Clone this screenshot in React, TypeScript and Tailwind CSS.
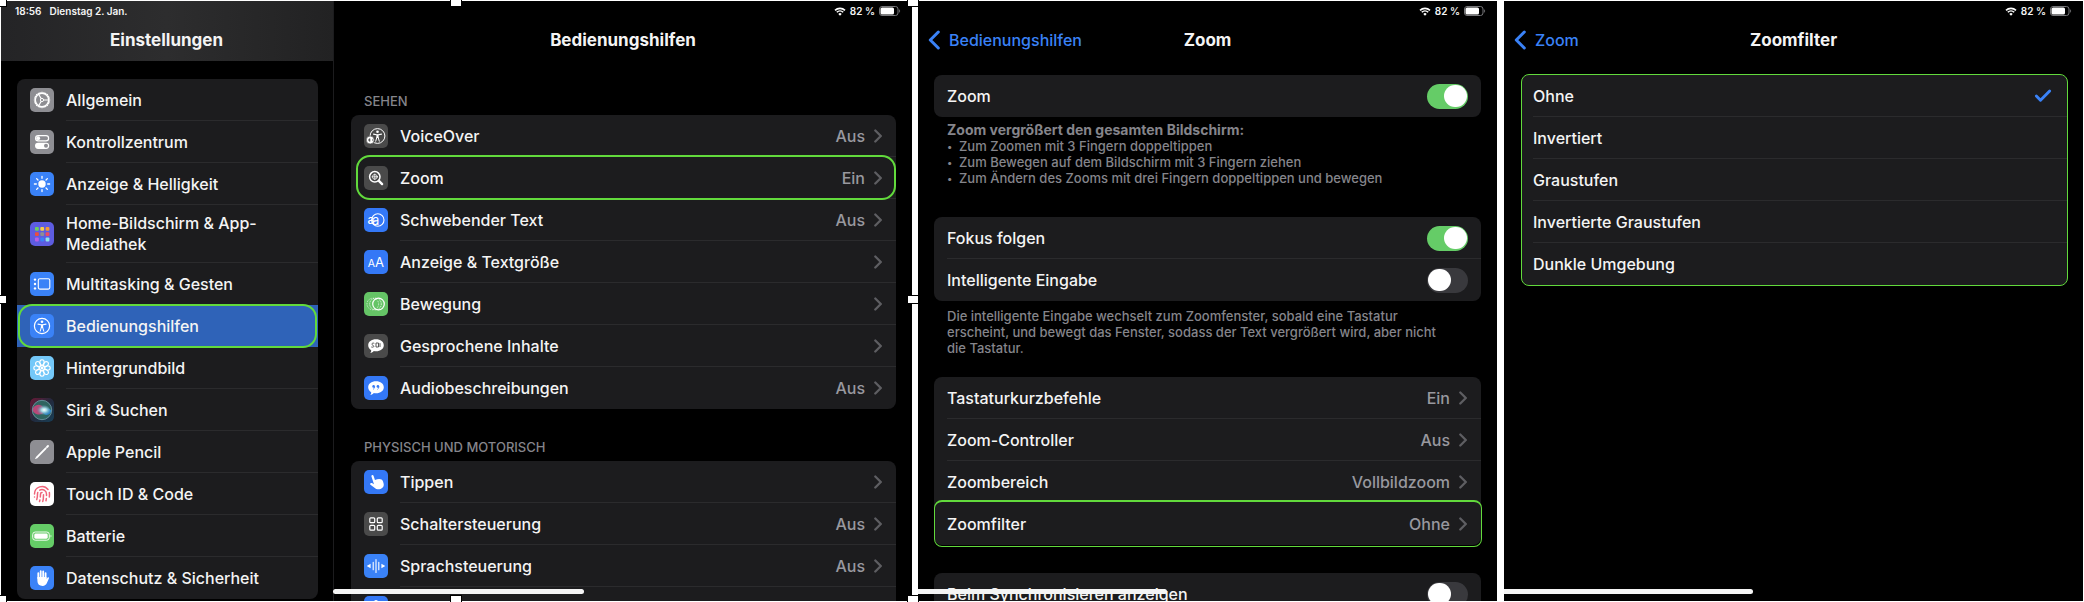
import React from 'react';
import { Check, Fingerprint } from 'lucide-react';

interface RowData {
  label: string;
  icon?: string;
  value?: string;
}

const sidebarRows: RowData[] = [
  { label: 'Allgemein', icon: 'gear' },
  { label: 'Kontrollzentrum', icon: 'toggles' },
  { label: 'Anzeige & Helligkeit', icon: 'sun' },
  { label: 'Home-Bildschirm & App-Mediathek', icon: 'grid' },
  { label: 'Multitasking & Gesten', icon: 'multitask' },
  { label: 'Bedienungshilfen', icon: 'access' },
  { label: 'Hintergrundbild', icon: 'flower' },
  { label: 'Siri & Suchen', icon: 'siri' },
  { label: 'Apple Pencil', icon: 'pencil' },
  { label: 'Touch ID & Code', icon: 'touch' },
  { label: 'Batterie', icon: 'battery' },
  { label: 'Datenschutz & Sicherheit', icon: 'privacy' },
];

const visionRows: RowData[] = [
  { label: 'VoiceOver', icon: 'voiceover', value: 'Aus' },
  { label: 'Zoom', icon: 'zoom', value: 'Ein' },
  { label: 'Schwebender Text', icon: 'hover', value: 'Aus' },
  { label: 'Anzeige & Textgröße', icon: 'textsize' },
  { label: 'Bewegung', icon: 'motion' },
  { label: 'Gesprochene Inhalte', icon: 'spoken' },
  { label: 'Audiobeschreibungen', icon: 'audio', value: 'Aus' },
];

const motorRows: RowData[] = [
  { label: 'Tippen', icon: 'tap' },
  { label: 'Schaltersteuerung', icon: 'switches', value: 'Aus' },
  { label: 'Sprachsteuerung', icon: 'voice', value: 'Aus' },
  { label: '', icon: 'next' },
];

const zoomRows: RowData[] = [
  { label: 'Tastaturkurzbefehle', value: 'Ein' },
  { label: 'Zoom-Controller', value: 'Aus' },
  { label: 'Zoombereich', value: 'Vollbildzoom' },
  { label: 'Zoomfilter', value: 'Ohne' },
];

const filters = ['Ohne', 'Invertiert', 'Graustufen', 'Invertierte Graustufen', 'Dunkle Umgebung'];

const iconBackground: Record<string, string> = {
  gear: 'bg-[#8e8e93]',
  toggles: 'bg-[#8e8e93]',
  sun: 'bg-[#3a82f7]',
  grid: 'bg-[#5d5ce0]',
  multitask: 'bg-[#3a82f7]',
  access: 'bg-[#3a82f7]',
  flower: 'bg-[#74c8f9]',
  siri: 'bg-[#1d1b2c]',
  pencil: 'bg-[#8e8e93]',
  touch: 'bg-white',
  battery: 'bg-[#65cc67]',
  privacy: 'bg-[#3a82f7]',
  voiceover: 'bg-[#4a4a4a]',
  zoom: 'bg-[#4a4a4a]',
  hover: 'bg-[#3478f6]',
  textsize: 'bg-[#3478f6]',
  motion: 'bg-[#65c466]',
  spoken: 'bg-[#4a4a4a]',
  audio: 'bg-[#3478f6]',
  tap: 'bg-[#3478f6]',
  switches: 'bg-[#4a4a4a]',
  voice: 'bg-[#3a82f7]',
  next: 'bg-[#3478f6]',
};

const appColors = ['#6bd05f', '#f7ce46', '#f19a37', '#eb4e3d', '#8e8e93', '#eb4b63', '#b65fe8', '#3a82f7', '#8fe3e8'];
const eighths = [0, 45, 90, 135, 180, 225, 270, 315];
const teeth = Array.from({ length: 24 }, (_, i) => i * 15);

// Kleine Figur mit ausgestreckten Armen
const Person = () => (
  <g fill="none" stroke="white" strokeLinecap="round" strokeLinejoin="round">
    <circle cx="12" cy="7.7" r="1.3" fill="white" stroke="none" />
    <path d="M8 10.1l2.9.6h2.2l2.9-.6" strokeWidth="1.1" />
    <path d="M12 10.7v3.2" strokeWidth="2.2" strokeLinecap="butt" />
    <path d="M10.2 17.2l1.1-3.6M13.8 17.2l-1.1-3.6" strokeWidth="1" />
  </g>
);

const Glyph = ({ name }: { name: string }) => {
  switch (name) {
    case 'gear':
      return (
        <g fill="none" stroke="white">
          <circle cx="12" cy="12" r="6.7" strokeWidth="1.4" />
          {teeth.map((a) => (
            <path key={a} d="M12 3.8v1.5" strokeWidth="1.1" transform={`rotate(${a} 12 12)`} />
          ))}
          <circle cx="12" cy="12" r="1.6" strokeWidth="1" />
          <path d="M13.6 12h5M11.2 10.6L8.6 6.2M11.2 13.4l-2.6 4.4" strokeWidth="1.1" />
        </g>
      );
    case 'toggles':
      return (
        <g>
          <rect x="5.6" y="5.6" width="13" height="5.2" rx="2.6" fill="none" stroke="white" strokeWidth="1.2" />
          <circle cx="8.2" cy="8.2" r="1.9" fill="white" />
          <rect x="5" y="12.7" width="14.2" height="6.2" rx="3.1" fill="white" />
          <circle cx="16" cy="15.8" r="2" fill="#8e8e93" />
        </g>
      );
    case 'sun':
      return (
        <g>
          <circle cx="12" cy="12" r="3.7" fill="white" />
          {eighths.map((a) => (
            <path key={a} d="M12 4.4v1.9" stroke="white" strokeWidth="1.3" strokeLinecap="round" transform={`rotate(${a} 12 12)`} />
          ))}
        </g>
      );
    case 'grid':
      return (
        <g>
          {appColors.map((c, i) => (
            <rect key={c} x={5 + (i % 3) * 5.3} y={5 + Math.floor(i / 3) * 5.3} width="3.8" height="3.8" rx="1" fill={c} />
          ))}
        </g>
      );
    case 'multitask':
      return (
        <g fill="white">
          <rect x="8.3" y="6.7" width="11.5" height="10.4" rx="1.6" fill="none" stroke="white" strokeWidth="1.1" />
          <circle cx="5" cy="7.6" r="1.2" />
          <circle cx="5" cy="12" r="1.2" />
          <circle cx="5" cy="16.4" r="1.2" />
        </g>
      );
    case 'access':
      return (
        <g>
          <circle cx="12" cy="12" r="7.6" fill="none" stroke="white" strokeWidth="1.2" />
          <Person />
        </g>
      );
    case 'flower':
      return (
        <g fill="none" stroke="white" strokeWidth="1.1">
          <circle cx="12" cy="12" r="2.4" />
          <circle cx="12" cy="12" r="0.7" fill="white" />
          {eighths.map((a) => (
            <ellipse key={a} cx="12" cy="6.5" rx="2.2" ry="2.7" transform={`rotate(${a} 12 12)`} />
          ))}
        </g>
      );
    case 'siri':
      return (
        <g>
          <defs>
            <linearGradient id="siriBack" x1="0" y1="0" x2="1" y2="1">
              <stop offset="0" stopColor="#6b1835" />
              <stop offset="0.5" stopColor="#222a3d" />
              <stop offset="1" stopColor="#173f56" />
            </linearGradient>
            <radialGradient id="siriGlow" cx="0.58" cy="0.5" r="0.55">
              <stop offset="0" stopColor="#ffffff" />
              <stop offset="0.35" stopColor="#a5dbe6" />
              <stop offset="1" stopColor="#4f8fa8" stopOpacity="0" />
            </radialGradient>
          </defs>
          <rect width="24" height="24" rx="5" fill="url(#siriBack)" />
          <circle cx="12" cy="12" r="10" fill="#2f6460" />
          <path d="M2.5 12a6 6 0 0 1 11-2.5l1 4.5a7 7 0 0 1-12-2z" fill="#d0437c" opacity="0.85" />
          <path d="M21.5 12.5c-3-3-7-3-9-.5 0 4 3 6 6 4.6 1.5-.9 2.6-2.2 3-4.1z" fill="#2f8ee0" opacity="0.8" />
          <circle cx="12" cy="12" r="9.7" fill="none" stroke="#7d9fb0" strokeWidth="0.7" />
          <ellipse cx="13" cy="12" rx="7" ry="5" fill="url(#siriGlow)" />
        </g>
      );
    case 'pencil':
      return (
        <g stroke="white" strokeLinecap="round">
          <path d="M6.6 17.6L15.7 8.3" strokeWidth="1.9" />
          <path d="M17 7l1-1" strokeWidth="1.9" />
          <path d="M5.6 18.6l1-1" strokeWidth="1" />
        </g>
      );
    case 'touch':
      return <Fingerprint x={3} y={3} width={18} height={18} color="#f0647a" strokeWidth={2} />;
    case 'battery':
      return (
        <g>
          <rect x="2.7" y="8" width="16.6" height="8.2" rx="2.6" fill="none" stroke="white" strokeWidth="0.9" />
          <rect x="4.3" y="9.5" width="13.4" height="5.2" rx="1.4" fill="white" />
          <path d="M20.6 10.7v2.8a1.6 1.6 0 0 0 0-2.8z" fill="white" />
        </g>
      );
    case 'privacy':
      return (
        <g>
          <path d="M8.3 12.5V7.2M10.7 11V5.2M13.2 11V5.4M15.6 12.5V7.2" stroke="white" strokeWidth="1.8" strokeLinecap="round" />
          <path d="M7.4 11h9.1v2.3l1-1.6c.6-.8 1.7-.2 1.4.7l-2 4.6c-.8 1.8-2.2 2.9-4.3 2.9-3.2 0-5.2-1.7-5.2-4.9z" fill="white" />
        </g>
      );
    case 'voiceover':
      return (
        <g>
          <g transform="translate(1.5 0)">
            <circle cx="12" cy="12" r="7.4" fill="none" stroke="white" strokeWidth="1" />
            <Person />
          </g>
          <circle cx="6.2" cy="16" r="4" fill="white" stroke="#4a4a4a" strokeWidth="0.7" />
          <path d="M4.3 16l1.7-1.5v3zM8.6 14.9v2.2" fill="#555" stroke="#555" strokeWidth="0.6" />
        </g>
      );
    case 'zoom':
      return (
        <g fill="none" stroke="white" strokeLinecap="round">
          <circle cx="10.8" cy="10.8" r="5.2" strokeWidth="1.5" />
          <path d="M14.9 14.9l3.2 3.2" strokeWidth="2.4" />
          <circle cx="10.8" cy="10.8" r="2.4" strokeWidth="0.7" />
          <path d="M10.8 8v5.6M8 10.8h5.6" strokeWidth="0.8" />
        </g>
      );
    case 'hover':
      return (
        <g>
          <circle cx="13.8" cy="12" r="6.2" fill="none" stroke="white" strokeWidth="1.1" />
          <text x="3.6" y="16" fill="white" fontSize="12" fontFamily="Inter, sans-serif" fontWeight="500">a</text>
          <text x="8" y="16.5" fill="white" fontSize="13" fontFamily="Inter, sans-serif" fontWeight="400">a</text>
        </g>
      );
    case 'textsize':
      return (
        <g fill="white" fontFamily="Inter, sans-serif">
          <text x="3.7" y="17" fontSize="10.5" fontWeight="400">A</text>
          <text x="11" y="17" fontSize="13" fontWeight="400">A</text>
        </g>
      );
    case 'motion':
      return (
        <g fill="none" stroke="white">
          <circle cx="14.5" cy="12" r="5.8" strokeWidth="1.2" />
          <circle cx="11.5" cy="12" r="5.8" strokeWidth="0.8" strokeDasharray="1.2 0.8" />
          <circle cx="8.8" cy="12" r="5.8" strokeWidth="0.8" strokeDasharray="0.8 1" />
        </g>
      );
    case 'spoken':
      return (
        <g>
          <path d="M12 5.2c4.5 0 7.8 2.5 7.8 6s-3.3 6-7.8 6c-.7 0-1.5-.1-2.2-.2-.8.9-2 1.7-3.5 1.9.7-.8 1-1.7.9-2.7-1.9-1.1-3-2.9-3-5 0-3.5 3.3-6 7.8-6z" fill="white" />
          <path d="M10.3 9.3c-2.2-.8-3.3 1-1.7 1.8 2 .8 1.5 2.7-1.3 1.9M12 9h2.5v4H12zM16 9.2v3.8" fill="none" stroke="#4a4a4a" strokeWidth="0.9" />
        </g>
      );
    case 'audio':
      return (
        <g>
          <path d="M12 5.2c4.5 0 7.8 2.5 7.8 6s-3.3 6-7.8 6c-.7 0-1.5-.1-2.2-.2-.8.9-2 1.7-3.5 1.9.7-.8 1-1.7.9-2.7-1.9-1.1-3-2.9-3-5 0-3.5 3.3-6 7.8-6z" fill="white" />
          <path d="M10.6 10.6c0 1.4-.5 2.2-1.5 2.8M14.9 10.6c0 1.4-.5 2.2-1.5 2.8" fill="none" stroke="#3478f6" strokeWidth="0.8" />
          <circle cx="9.6" cy="10.4" r="1.3" fill="#3478f6" />
          <circle cx="13.9" cy="10.4" r="1.3" fill="#3478f6" />
        </g>
      );
    case 'tap':
      return (
        <g fill="white" transform="rotate(-18 12 12)">
          <path d="M9.4 5.3c0-1.6 2.2-1.6 2.2 0v4.5c3.6-.2 7.2.5 7.2 4v1.7c0 2.7-1.9 4.5-4.7 4.5-2.6 0-3.9-.9-5.3-3l-2.9-4c-.8-1.3.8-2.3 1.9-1.2l1.6 1.7z" />
        </g>
      );
    case 'switches':
      return (
        <g fill="none" stroke="white" strokeWidth="1.2">
          <rect x="5.8" y="5.8" width="4.9" height="4.9" rx="1" />
          <rect x="13.3" y="5.8" width="4.9" height="4.9" rx="1" />
          <rect x="5.8" y="13.3" width="4.9" height="4.9" rx="1" />
          <rect x="13.3" y="13.3" width="4.9" height="4.9" rx="1" />
        </g>
      );
    case 'voice':
      return (
        <g fill="white">
          <path d="M9.2 8.3v7.4M12 5.5v13M14.8 8.3v7.4" stroke="white" strokeWidth="1.1" strokeLinecap="round" />
          <path d="M6.6 9.8v4.4L2.7 12zM17.4 9.8v4.4l3.9-2.2z" />
        </g>
      );
    default:
      return <circle cx="12" cy="6" r="2" fill="white" />;
  }
};

const AppIcon = ({ name }: { name: string }) => (
  <span className={`size-6 shrink-0 overflow-hidden rounded-[5px] ${iconBackground[name]}`}>
    <svg viewBox="0 0 24 24" className="size-6" aria-hidden="true">
      <Glyph name={name} />
    </svg>
  </span>
);

const Chevron = () => (
  <svg viewBox="0 0 8 14" className="h-[14px] w-2 shrink-0" aria-hidden="true">
    <path d="M1.3 1.5L6.8 7l-5.5 5.5" fill="none" stroke="#5e5e62" strokeWidth="2.3" strokeLinecap="round" strokeLinejoin="round" />
  </svg>
);

const Card = ({ children, className = '' }: { children: React.ReactNode; className?: string }) => (
  <div className={`rounded-lg bg-[#1c1c1e] ${className}`}>{children}</div>
);

const Row = ({ row, last = false, chevron = true }: { row: RowData; last?: boolean; chevron?: boolean }) => (
  <a href="#" className="flex gap-3 pl-[13px]">
    {row.icon && (
      <span className="flex items-center">
        <AppIcon name={row.icon} />
      </span>
    )}
    <span className={`flex min-h-[42px] flex-1 items-center gap-[9px] border-b pt-px pr-[14px] ${last ? 'border-transparent' : 'border-[#2b2b2d]'}`}>
      <span className="flex-1">{row.label}</span>
      {row.value && <span className="text-[#98989f]">{row.value}</span>}
      {chevron && <Chevron />}
    </span>
  </a>
);

// Grüne Markierung um eine Zeile
const Highlight = ({ className }: { className: string }) => (
  <span className={`pointer-events-none absolute border-[#62da3c] ${className}`} />
);

const Status = () => (
  <div className="flex h-5 items-center justify-end gap-1 pr-[11px] text-[10px] font-semibold">
    <svg viewBox="0 0 12 9" className="h-[9px] w-3" aria-hidden="true">
      <path d="M1 3.4a7.2 7.2 0 0 1 10 0M2.8 5.3a4.6 4.6 0 0 1 6.4 0" fill="none" stroke="white" strokeWidth="1.6" />
      <path d="M6 8.7L4.3 6.9a2.5 2.5 0 0 1 3.4 0z" fill="white" />
    </svg>
    <span>82 %</span>
    <svg viewBox="0 0 22 10" className="h-[10px] w-[22px]" aria-hidden="true">
      <rect x="0.5" y="0.5" width="18.5" height="9" rx="2.5" fill="none" stroke="#77777a" />
      <rect x="1.5" y="1.5" width="13.5" height="7" rx="1.6" fill="white" />
      <path d="M20.2 3.3v3.4a2 2 0 0 0 0-3.4z" fill="#77777a" />
    </svg>
  </div>
);

const NavBar = ({ title, back }: { title: string; back?: string }) => (
  <div className="grid h-10 grid-cols-[1fr_auto_1fr] items-center pb-[2px]">
    {back ? (
      <a href="#" className="flex items-center gap-[9px] pl-[10px] text-[#3a82f7]">
        <svg viewBox="0 0 12 20" className="h-5 w-3" aria-hidden="true">
          <path d="M10.3 2L2.3 10l8 8" fill="none" stroke="#3a82f7" strokeWidth="3" strokeLinecap="round" strokeLinejoin="round" />
        </svg>
        {back}
      </a>
    ) : (
      <span />
    )}
    <h1 className="text-[17px] font-bold">{title}</h1>
    <span />
  </div>
);

const Toggle = ({ label, checked = false }: { label: string; checked?: boolean }) => (
  <label className="relative ml-[13px] flex min-h-[42px] items-center justify-between border-b border-[#2b2b2d] pt-px pr-[13px] last:border-transparent">
    {label}
    <input type="checkbox" role="switch" defaultChecked={checked} className="peer sr-only" />
    <span className="flex h-[25px] w-[41px] items-center rounded-full bg-[#39393d] px-px peer-checked:justify-end peer-checked:bg-[#65cc67]">
      <span className="h-[22px] w-[23px] rounded-full bg-white" />
    </span>
  </label>
);

const HomeBar = ({ className }: { className: string }) => (
  <span className={`absolute bottom-2 h-[5px] bg-[#f4f4f4] ${className}`} />
);

const Handle = ({ className }: { className: string }) => (
  <span className={`absolute z-10 h-[9px] w-3 border border-black bg-white ${className}`} />
);

const App: React.FC = () => {
  return (
    <main className="relative grid h-screen grid-cols-[334fr_578fr_585fr_587fr] grid-rows-[minmax(0,1fr)] overflow-hidden bg-black pt-px font-['Inter',sans-serif] text-base leading-[21px] font-medium text-[#f4f4f4]">
      {/* Einstellungen */}
      <nav className="min-w-0 overflow-hidden border-r border-[#1c1c1e]">
        <header className="h-[60px] bg-linear-to-r from-[#242426] via-[#2d2d2e] to-[#222223]">
          <div className="flex h-5 items-center gap-2 pl-[15px] text-[10px] font-semibold">
            <span>18:56</span>
            <span>Dienstag 2. Jan.</span>
          </div>
          <NavBar title="Einstellungen" />
        </header>
        <Card className="mt-[18px] mr-[15px] ml-[17px]">
          {sidebarRows.map((row, i) => (
            <div key={row.label} className={`relative ${row.icon === 'access' ? 'bg-[#2f63b8]' : ''} ${row.icon === 'grid' ? 'flex min-h-[58px] [&>a]:flex-1' : ''}`}>
              <Row row={row} chevron={false} last={i === 4 || i === 5 || i === 11} />
              {row.icon === 'access' && <Highlight className="inset-x-px -inset-y-px rounded-[14px] border-2" />}
            </div>
          ))}
        </Card>
      </nav>

      {/* Bedienungshilfen */}
      <section className="min-w-0 overflow-hidden">
        <Status />
        <NavBar title="Bedienungshilfen" />
        <div className="mr-4 ml-[17px]">
          <h2 className="mt-[30px] mb-1 pl-[13px] text-[13px] leading-5 font-medium text-[#85858b]">SEHEN</h2>
          <Card>
            {visionRows.map((row, i) => (
              <div key={row.label} className="relative">
                <Row row={row} last={i === 6} />
                {row.label === 'Zoom' && <Highlight className="-top-[2px] right-0 -bottom-px left-[5px] rounded-[14px] border-2" />}
              </div>
            ))}
          </Card>
          <h2 className="mt-7 mb-1 pl-[13px] text-[13px] leading-5 font-medium text-[#85858b]">PHYSISCH UND MOTORISCH</h2>
          <Card>
            {motorRows.map((row) => (
              <Row key={row.icon} row={row} chevron={row.label !== ''} />
            ))}
          </Card>
        </div>
      </section>

      {/* Zoom */}
      <section className="relative min-w-0 overflow-hidden border-l-[6px] border-white">
        <Status />
        <NavBar title="Zoom" back="Bedienungshilfen" />
        <div className="mx-4">
          <Card className="mt-[14px]">
            <Toggle label="Zoom" checked />
          </Card>
          <div className="mt-[5px] pl-[13px] text-[13px] leading-4 font-medium text-[#85858b]">
            <p className="text-sm leading-4 font-bold">Zoom vergrößert den gesamten Bildschirm:</p>
            <ul className="[&>li]:flex [&>li]:before:w-3 [&>li]:before:text-[10px] [&>li]:before:content-['•']">
              <li>Zum Zoomen mit 3 Fingern doppeltippen</li>
              <li>Zum Bewegen auf dem Bildschirm mit 3 Fingern ziehen</li>
              <li>Zum Ändern des Zooms mit drei Fingern doppeltippen und bewegen</li>
            </ul>
          </div>
          <Card className="mt-[31px]">
            <Toggle label="Fokus folgen" checked />
            <Toggle label="Intelligente Eingabe" />
          </Card>
          <p className="mt-[7px] pr-7 pl-[13px] text-[13px] leading-4 font-medium text-[#85858b]">
            Die intelligente Eingabe wechselt zum Zoomfenster, sobald eine Tastatur erscheint, und bewegt das Fenster, sodass der Text vergrößert wird, aber nicht die Tastatur.
          </p>
          <Card className="mt-[21px]">
            {zoomRows.map((row, i) => (
              <div key={row.label} className="relative">
                <Row row={row} last={i > 1} />
                {row.label === 'Zoomfilter' && <Highlight className="-top-[3px] -right-px -bottom-[2px] left-0 rounded-lg border border-t-2" />}
              </div>
            ))}
          </Card>
          <Card className="mt-7">
            <Toggle label="Beim Synchronisieren anzeigen" />
          </Card>
        </div>
        <HomeBar className="left-0 w-[43%] rounded-r-full" />
      </section>

      {/* Zoomfilter */}
      <section className="relative min-w-0 overflow-hidden border-r border-l-[7px] border-white">
        <Status />
        <NavBar title="Zoomfilter" back="Zoom" />
        <Card className="relative mt-[14px] mr-[15px] ml-[17px]">
          {filters.map((filter, i) => (
            <button key={filter} type="button" className="flex w-full pl-3 text-left">
              <span className={`flex h-[42px] flex-1 items-center justify-between border-b pt-px pr-[15px] ${i === 4 ? 'border-transparent' : 'border-[#2b2b2d]'}`}>
                {filter}
                {i === 0 && <Check className="size-5 text-[#3a82f7]" strokeWidth={3.5} />}
              </span>
            </button>
          ))}
          <Highlight className="-top-px right-0 -bottom-px left-0 rounded-lg border" />
        </Card>
        <HomeBar className="left-0 w-[43%] rounded-r-full" />
      </section>

      <HomeBar className="left-[16%] w-[12%] rounded-full" />
      <span className="absolute top-0 left-0 h-px w-full bg-white" />
      <span className="absolute bottom-0 left-0 h-px w-full bg-white" />
      <span className="absolute top-0 left-0 h-full w-px bg-white" />
      <Handle className="-top-[2px] -left-[5px]" />
      <Handle className="-top-[2px] left-[21.6%]" />
      <Handle className="-top-[2px] left-[43.5%]" />
      <Handle className="top-[49%] -left-[5px]" />
      <Handle className="top-[49%] left-[43.5%]" />
      <Handle className="-bottom-[2px] -left-[5px]" />
      <Handle className="-bottom-[2px] left-[21.6%]" />
      <Handle className="-bottom-[2px] left-[43.5%]" />
    </main>
  );
};

export default App;
